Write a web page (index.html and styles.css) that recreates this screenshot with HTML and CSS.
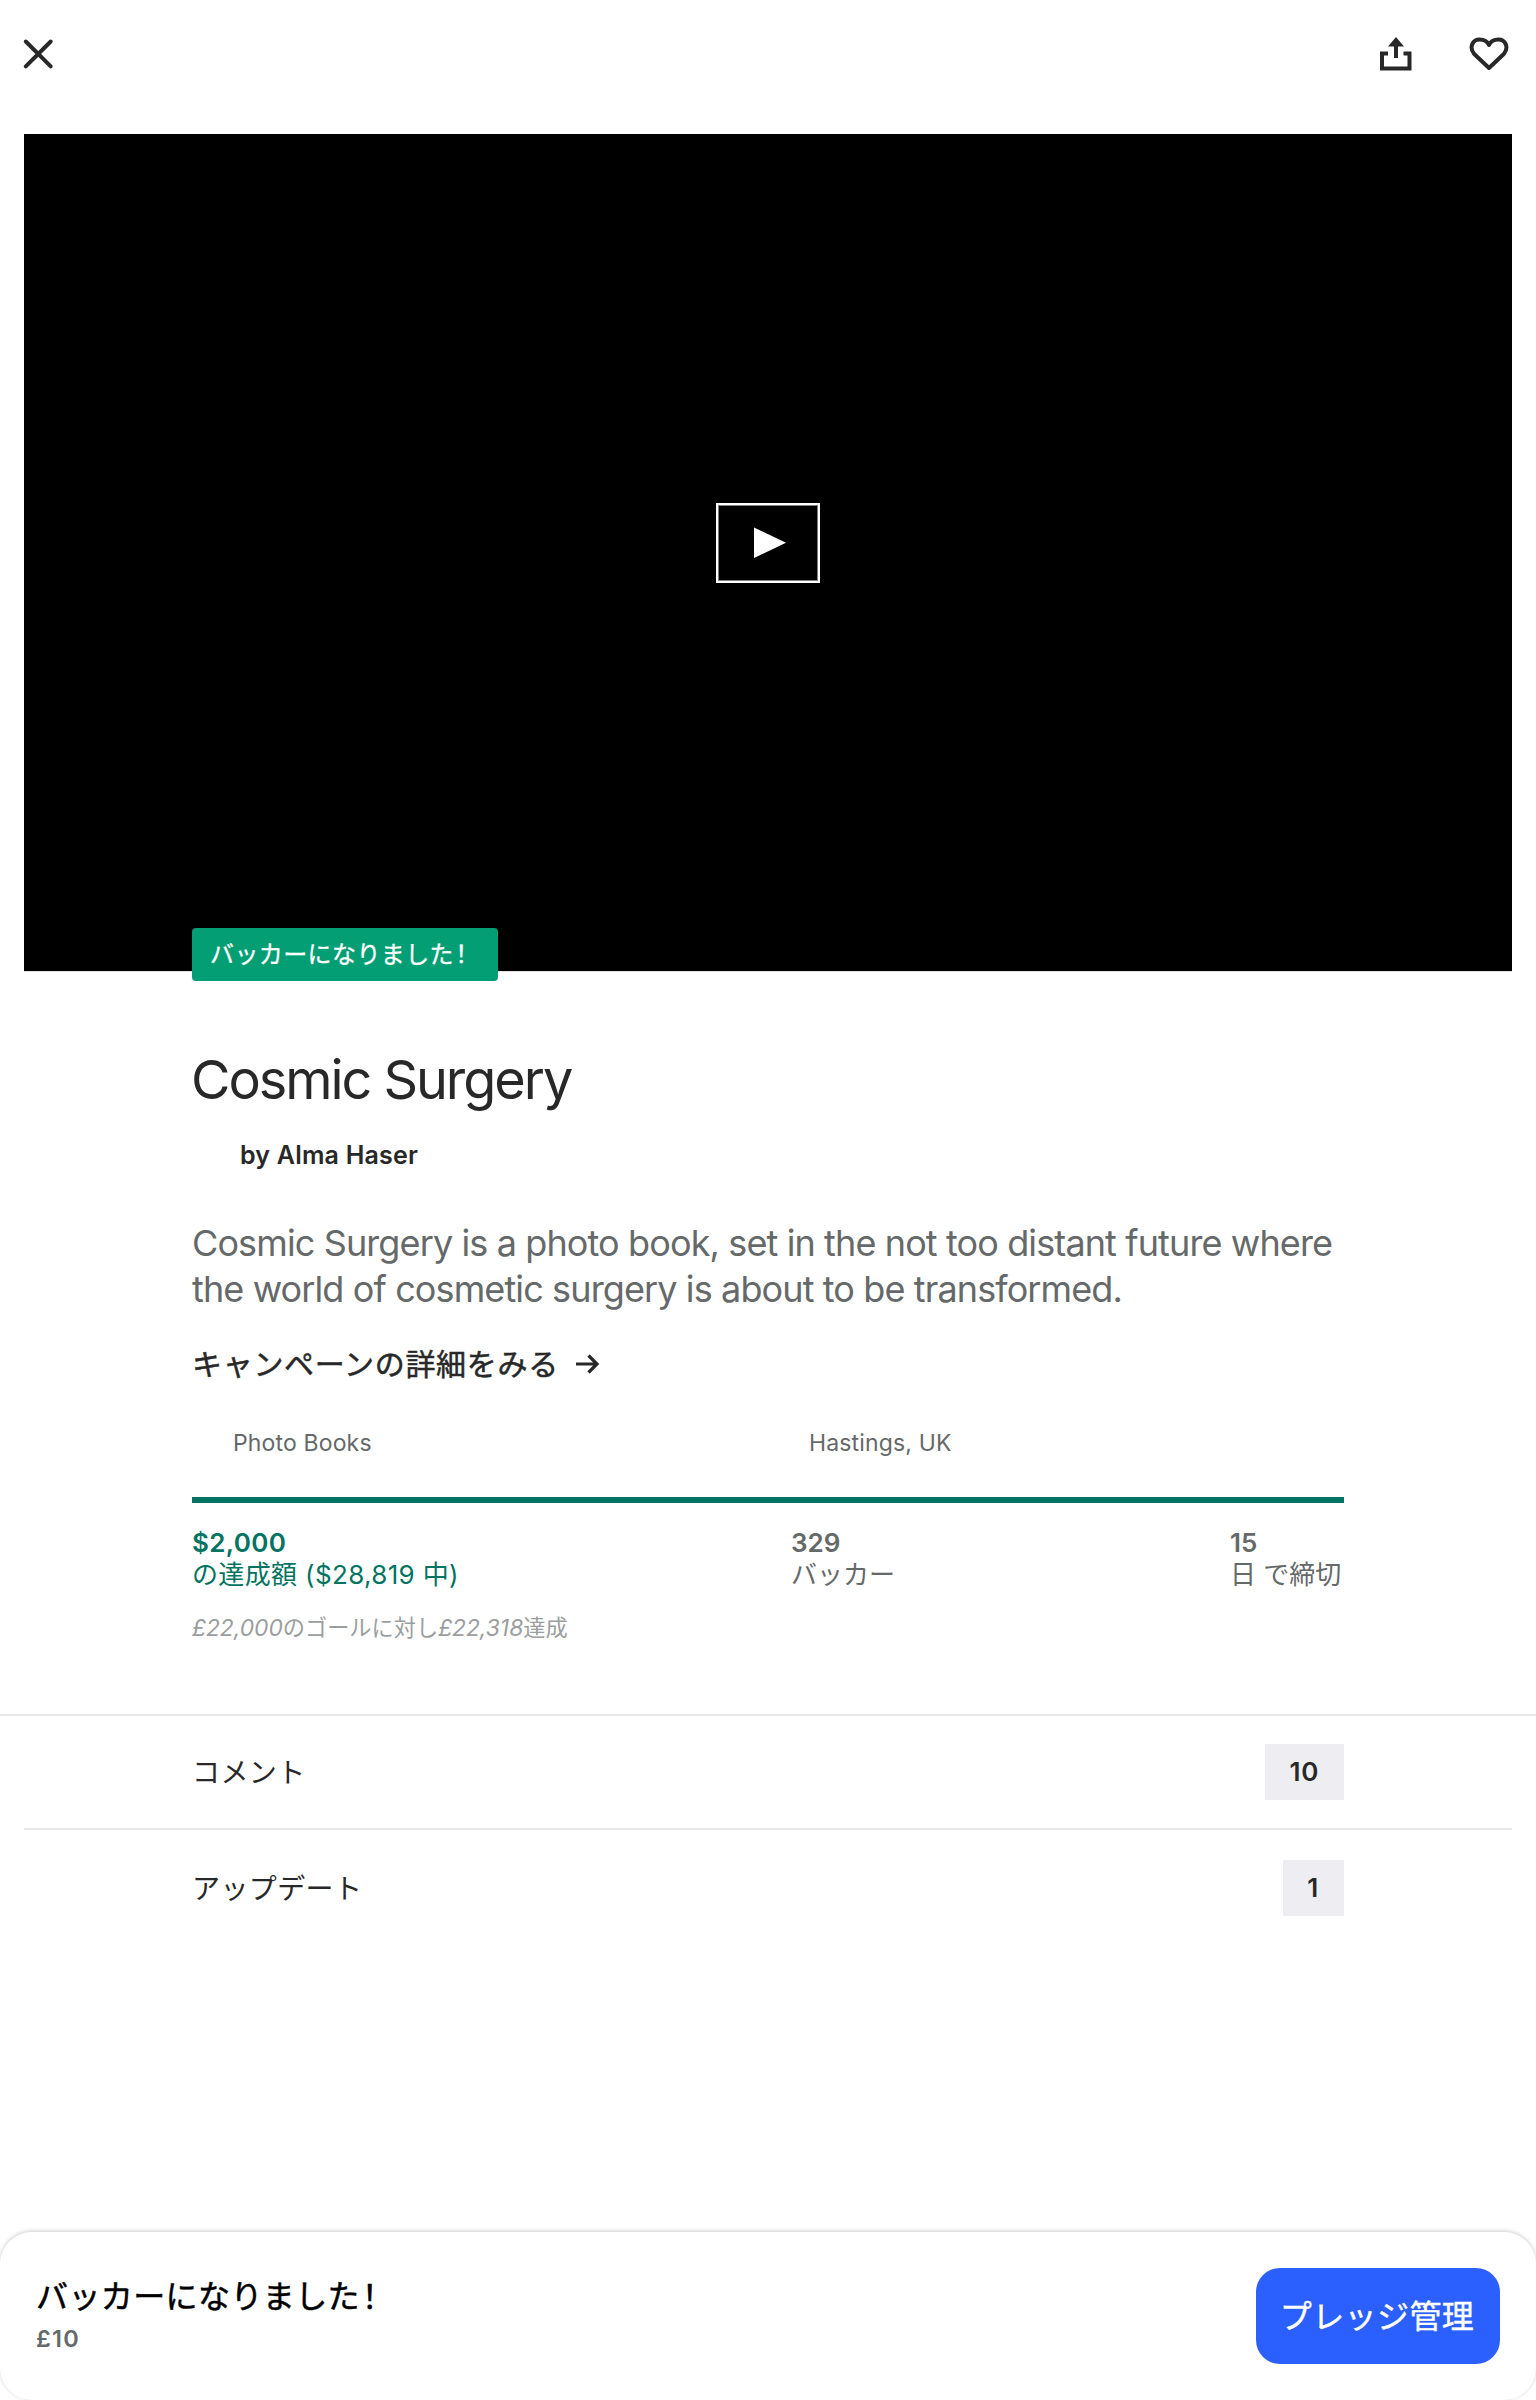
FILE: index.html
```html
<!DOCTYPE html>
<html lang="ja">
<head>
<meta charset="utf-8">
<title>Cosmic Surgery</title>
<link rel="stylesheet" href="styles.css">
</head>
<body>
<header class="topbar">
  <svg class="icon-close" width="32" height="34" viewBox="0 0 32 34"><path d="M3.800 4.500 28.700 29.300M28.700 4.500 3.800 29.300"/></svg>
  <div class="topbar-actions">
    <svg class="icon-share" width="34" height="36" viewBox="0 0 34 36"><path class="line" d="M10 16.500H4V31.500H31.500V16.500H25.500M18 21V9"/><path class="head" d="M18 0 26 9.500H10Z"/></svg>
    <svg class="icon-heart" width="40" height="36" viewBox="0 0 40 36"><path d="M20 31 5.200 17C-.500 10 4 2.500 10.500 2.500C15 2.500 18.500 4.500 20 8C21.500 4.500 25 2.500 29.500 2.500C36 2.500 40.500 10 34.800 17Z"/></svg>
  </div>
</header>
<section class="video">
  <div class="play"><svg width="32" height="32" viewBox="0 0 32 32"><path d="M0 .5V31L32 15.700Z"/></svg></div>
  <div class="ribbon">バッカーになりました<span class="mark">！</span></div>
</section>
<main class="project">
  <h1 class="title">Cosmic Surgery</h1>
  <p class="creator">by Alma Haser</p>
  <p class="blurb">Cosmic Surgery is a photo book, set in the not too distant future where<br>the world of cosmetic surgery is about to be transformed.</p>
  <a class="more"><span>キャンペーンの詳細をみる</span><svg width="24" height="22" viewBox="0 0 24 22"><path d="M0 11H21M12.500 2.500 21 11 12.500 19.500"/></svg></a>
  <div class="tags"><span class="tag">Photo Books</span><span class="tag">Hastings, UK</span></div>
  <div class="progress"></div>
  <div class="stats">
    <div class="stat pledged"><b>$2,000</b><span>の達成額 ($28,819 中)</span></div>
    <div class="stat backers"><b>329</b><span>バッカー</span></div>
    <div class="stat days"><b>15</b><span>日 で締切</span></div>
  </div>
  <p class="goal"><i>£22,000</i>のゴールに対し<i>£22,318</i>達成</p>
</main>
<nav class="links">
  <a class="row"><span class="label">コメント</span><b class="count">10</b></a>
  <a class="row"><span class="label">アップデート</span><b class="count">1</b></a>
</nav>
<footer class="pledge">
  <div><p class="pledge-title">バッカーになりました<span class="mark">！</span></p><p class="amount">£10</p></div>
  <button class="manage">プレッジ管理</button>
</footer>
</body>
</html>
```
FILE: styles.css
```css
* { box-sizing: border-box; }
body { margin: 0; width: 1536px; height: 2400px; display: flex; flex-direction: column; background: #fff; color: #282828; font-family: Inter, "Noto Sans CJK JP", sans-serif; overflow: hidden; }
h1, p { margin: 0; font-weight: 400; white-space: nowrap; }

.topbar { height: 134px; flex: none; display: flex; justify-content: space-between; padding: 37px 27px 0 22px; }
.topbar svg { fill: none; stroke: #282828; stroke-width: 4; }
.topbar .icon-close { stroke-linecap: round; }
.topbar-actions { display: flex; gap: 57px; }
.topbar .head { fill: #282828; stroke: none; }
.topbar .icon-heart { stroke-linejoin: round; }

.video { position: relative; flex: none; height: 838px; margin: 0 24px; padding-bottom: 19px; background: #000; border-bottom: 1px solid #e4e0e6; display: flex; align-items: center; justify-content: center; }
.play { width: 104px; height: 80px; border: 2px solid #fff; box-shadow: inset 0 0 0 1px #808080; display: flex; align-items: center; justify-content: center; fill: #fff; padding-left: 4px; }
.ribbon { position: absolute; left: 168px; top: 794px; width: 306px; height: 53px; border-radius: 4px; background: #039e74; color: #fff; font-size: 24px; line-height: 54px; padding-left: 18px; letter-spacing: .4px; white-space: nowrap; -webkit-text-stroke: .3px currentColor; }
.mark { margin-left: -.2em; }

.project { margin: 0 192px; height: 742px; flex: none; padding-top: 74px; color: #656969; }
.title { font-size: 54px; line-height: 68px; color: #282828; letter-spacing: -2.05px; margin-left: -1px; }
.creator { font-size: 25px; font-weight: 600; line-height: 32px; color: #282828; padding-left: 48px; margin-top: 25px; letter-spacing: .2px; }
.blurb { font-size: 36px; line-height: 46px; margin-top: 49px; letter-spacing: -.88px; }
.more { display: flex; align-items: center; gap: 17px; margin-top: 26px; height: 48px; font-size: 30px; color: #282828; letter-spacing: .7px; -webkit-text-stroke: .5px currentColor; }
.more svg { fill: none; stroke: #282828; stroke-width: 3.2; margin-top: 3px; }
.tags { display: grid; grid-template-columns: 1fr 1fr; margin-top: 41px; font-size: 23px; line-height: 32px; letter-spacing: .15px; }
.tag { padding-left: 41px; }
.progress { height: 6px; background: #037362; margin-top: 38px; }
.stats { display: flex; justify-content: space-between; margin-top: 24px; font-size: 26px; line-height: 32px; white-space: nowrap; }
.stat { display: flex; flex-direction: column; }
.stat b { font-weight: 600; }
.pledged { color: #037362; width: 264px; letter-spacing: .35px; }
.days { width: 114px; }
.goal { font-size: 22.2px; line-height: 32px; margin-top: 21px; color: #9b9e9e; }
.goal i { font-size: 22.8px; }

.links { flex: none; border-top: 2px solid #e8e8e8; }
.row { display: flex; justify-content: space-between; align-items: center; height: 114px; padding: 0 168px; margin: 0 24px; font-size: 28px; letter-spacing: .4px; border-bottom: 2px solid #e8e8e8; }
.row + .row { border: 0; height: 116px; }
.label { padding-bottom: 3px; }
.count { background: #eeedf2; height: 56px; line-height: 56px; padding: 0 25px 0 24.5px; font-size: 26px; font-weight: 600; letter-spacing: .7px; }

.pledge { margin-top: auto; height: 168px; flex: none; border-radius: 32px; box-shadow: 0 -1px 4px rgba(0,0,0,.2); display: flex; justify-content: space-between; padding: 36px; }
.pledge-title { font-size: 32px; line-height: 56px; margin-top: 1px; color: #000; letter-spacing: .4px; -webkit-text-stroke: .5px currentColor; }
.amount { font-size: 23.5px; font-weight: 600; color: #656969; line-height: 28px; letter-spacing: 1.2px; }
.manage { width: 244px; height: 96px; border: 0; border-radius: 24px; background: #2b60ff; color: #fff; font: 400 32px/96px Inter, "Noto Sans CJK JP", sans-serif; padding: 1px 2px 0 0; letter-spacing: .4px; -webkit-text-stroke: .4px currentColor; }
```
